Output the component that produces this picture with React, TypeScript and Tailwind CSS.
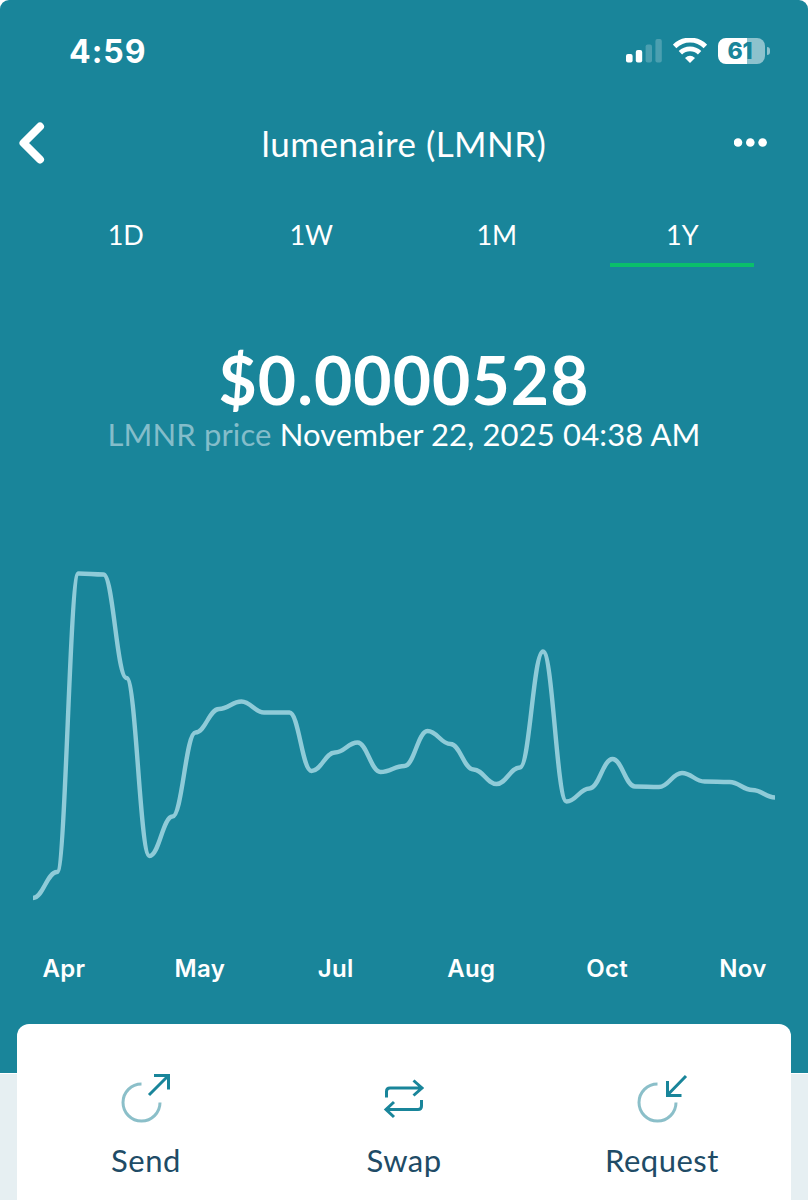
import { ReactNode } from 'react'

const RANGES = ['1D', '1W', '1M', '1Y']
const MONTHS = ['Apr', 'May', 'Jul', 'Aug', 'Oct', 'Nov']

const POINTS: [number, number][] = [
  [33, 898], [57, 872], [78.5, 573.5], [103.5, 574.5], [126.5, 678], [149.5, 856], [172.5, 816.5],
  [195.5, 732.5], [219, 709], [241.5, 701.5], [264, 712.5], [289.5, 712.5], [311.5, 771], [335, 752.5],
  [357.5, 742.5], [380.5, 772], [404.5, 766], [427.5, 731], [450.5, 744], [473.5, 769.5], [496.5, 784],
  [520, 767.5], [543, 651.5], [566.5, 801.5], [589.5, 788.5], [612.5, 759], [635, 786.5], [659, 787],
  [682, 773], [704.5, 781.5], [729.5, 782], [752.5, 790], [775, 797.5],
]

// every segment leaves and enters its points horizontally
function smoothPath(points: [number, number][]) {
  return points.reduce((d, [x, y], i) => {
    if (i === 0) return `M${x} ${y}`
    const [px, py] = points[i - 1]
    const k = (x - px) * 0.42
    return `${d} C${px + k} ${py} ${x - k} ${y} ${x} ${y}`
  }, '')
}

function StatusBar() {
  return (
    <div className="flex h-[102px] items-center justify-between pl-[69px] pr-[38px] font-['Inter',sans-serif]">
      <span className="pt-[2px] text-[32px] font-bold leading-none tracking-[1px]">4:59</span>
      <div className="flex items-center">
        <svg width="36" height="26" viewBox="0 0 36 26" fill="#fff">
          <rect x="0" y="16" width="6.6" height="8.5" rx="2" />
          <rect x="9.8" y="12" width="6.4" height="12.5" rx="2" />
          <rect x="19.6" y="6.5" width="6.4" height="18" rx="2" opacity="0.22" />
          <rect x="29.4" y="1" width="6.4" height="23.5" rx="2" opacity="0.22" />
        </svg>
        <svg className="ml-[11px]" width="34" height="26" viewBox="0 0 34 26" fill="none" stroke="#fff">
          <path d="M1.6 8.4A22 22 0 0 1 32.4 8.4" strokeWidth="5" />
          <path d="M7.4 14.8A13.8 13.8 0 0 1 26.6 14.8" strokeWidth="4.8" />
          <path d="M17 25L12 19.9Q17 15.6 22 19.9Z" fill="#fff" stroke="none" />
        </svg>
        <div className="ml-[11px] flex h-[26px] w-[47px] items-center justify-center rounded-[8px] bg-[linear-gradient(90deg,#fff_61%,#8dc2cd_61%)] pr-[3px] text-[23px] font-extrabold leading-none tracking-[-0.3px] text-[#19859a]">
          61
        </div>
        <div className="ml-[2px] h-[8px] w-[3px] rounded-r-full bg-[#8dc2cd]" />
      </div>
    </div>
  )
}

function Action({ label, children }: { label: string; children: ReactNode }) {
  return (
    <button className="flex flex-1 flex-col items-center pt-[46px]">
      <svg width="56" height="56" viewBox="0 0 56 56" fill="none" stroke="#19859a" strokeWidth="3">
        {children}
      </svg>
      <span className="mt-[14px] text-[31px] leading-[40px] tracking-[0.5px] text-[#204b66]">{label}</span>
    </button>
  )
}

export default function App() {
  return (
    <div className="h-[1200px] w-[808px] overflow-hidden bg-white font-['Lato',sans-serif] text-white">
      <div className="flex h-[1073px] flex-col rounded-t-[9px] bg-[#19859a]">
        <StatusBar />

        <header className="grid h-[82px] grid-cols-[60px_1fr_60px] items-center pl-[18px] pr-[18px]">
          <svg width="28" height="44" viewBox="0 0 28 44" fill="none" stroke="#fff" strokeWidth="8" strokeLinecap="round" strokeLinejoin="round">
            <path d="M22 5.5L5.5 22L22 38.5" />
          </svg>
          <h1 className="text-center text-[35px] leading-none tracking-[0.45px]">lumenaire (LMNR)</h1>
          <svg className="ml-[4px]" width="34" height="10" viewBox="0 0 34 10" fill="#fff">
            <circle cx="4" cy="4.5" r="4.3" />
            <circle cx="16.3" cy="4.5" r="4.3" />
            <circle cx="28.6" cy="4.5" r="4.3" />
          </svg>
        </header>

        <nav className="mt-[24px] grid h-[60px] grid-cols-4 px-[33px]">
          {RANGES.map(r => (
            <div key={r} className="flex flex-col items-center">
              <span className="pt-[7px] text-[27px] leading-[40px]">{r}</span>
              {r === '1Y' && <span className="mt-[8px] h-[4px] w-[144px] bg-[#0abf6b]" />}
            </div>
          ))}
        </nav>

        <section className="mt-[74px] flex flex-col items-center whitespace-nowrap">
          <div className="text-[66px] font-bold leading-[76px] tracking-[1.1px]">$0.0000528</div>
          <p className="-mt-[3px] text-[31px] leading-[38px] tracking-[0.14px]">
            <span className="text-[#84bdca]">LMNR price</span> November 22, 2025 04:38 AM
          </p>
        </section>

        <svg className="mt-[87px] shrink-0" width="808" height="370" viewBox="0 540 808 370" fill="none">
          <path d={smoothPath(POINTS)} stroke="#8fcbd8" strokeWidth="4.4" />
        </svg>

        <div className="mt-[41px] flex justify-between pl-[22px] pr-[23px] font-['Inter',sans-serif] text-[24px] font-semibold leading-[36px] tracking-[0.3px]">
          {MONTHS.map(m => (
            <span key={m} className="w-[84px] text-center">{m}</span>
          ))}
        </div>
      </div>

      <div className="h-[127px] border-t border-white bg-[#e6eff2] px-[17px]">
        <div className="relative -mt-[50px] flex h-[177px] rounded-t-[12px] bg-white">
          <Action label="Send">
            <path d="M23.5 14A18.5 18.5 0 1 0 42 32.5" stroke="#8bbfc9" />
            <path d="M31 25L50 6M36 5.5H50.5V19.5" />
          </Action>
          <Action label="Swap">
            <path d="M10.5 27.5V21.5Q10.5 18 14 18H46M37.5 10.5L46 18L37.5 25.5" />
            <path d="M45.5 30V36Q45.5 39.5 42 39.5H10M18 32L10 39.5L18 47" />
          </Action>
          <Action label="Request">
            <path d="M23.5 14A18.5 18.5 0 1 0 42 32.5" stroke="#8bbfc9" />
            <path d="M52 6L34 24.5M33.5 11V25.5H47.5" />
          </Action>
        </div>
      </div>
    </div>
  )
}
